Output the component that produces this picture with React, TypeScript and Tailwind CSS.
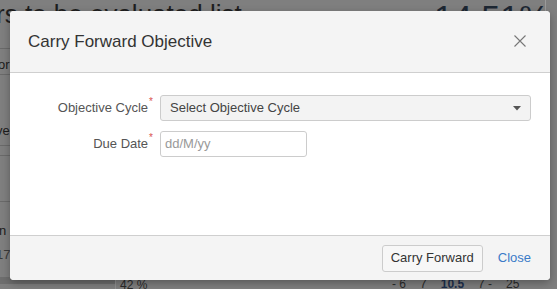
import React from "react";

export default function App() {
  return (
    <div
      className="relative w-[557px] h-[289px] overflow-hidden bg-[#7f7f7f]"
      style={{ fontFamily: '"Liberation Sans", Arial, sans-serif' }}
    >
      {/* faded page behind overlay */}
      <div className="absolute inset-0 text-[#1c1c1c]">
        <div className="absolute left-[-4px] top-[-5px] text-[26px] text-[#1e1e1e] whitespace-nowrap">rs to be evaluated list</div>
        <div className="absolute left-[434px] top-[-8px] text-[34px] text-[#1d2733] whitespace-nowrap">14.51%</div>
        <div className="absolute left-[545px] top-0 h-[11px] w-px bg-[#9a9a9a]" />
        <div className="absolute left-0 top-[48px] w-[12px] h-px bg-[#6a6a6a]" />
        <div className="absolute left-[-2px] top-[55px] text-[13px]">or</div>
        <div className="absolute left-0 top-[74px] w-[12px] h-px bg-[#6a6a6a]" />
        <div className="absolute left-[-4px] top-[121px] text-[13px]">ve</div>
        <div className="absolute left-0 top-[145px] w-[12px] h-px bg-[#6a6a6a]" />
        <div className="absolute left-0 top-[155px] w-[12px] h-px bg-[#6a6a6a]" />
        <div className="absolute left-0 top-[201px] w-[12px] h-px bg-[#6a6a6a]" />
        <div className="absolute left-[-1px] top-[221px] text-[13px]">n</div>
        <div className="absolute left-[-4px] top-[245px] text-[13px] text-[#3a3a3a]">17</div>
        <div className="absolute left-0 top-[277px] w-[115px] h-[7px] bg-[#6e6e6e]" />
        <div className="absolute left-[115px] top-[276px] w-px h-[13px] bg-[#909090]" />
        <div className="absolute left-[120px] top-[276px] text-[12px] text-[#2a2a2a]">42 %</div>
        <div className="absolute left-[392px] top-[275px] text-[12px] text-[#2a2a2a] whitespace-nowrap flex gap-[14px]">
          <span>- 6</span>
          <span>7</span>
          <span className="underline text-[#1d2f4d] font-bold">10.5</span>
          <span>7 -</span>
          <span>25</span>
        </div>
      </div>

      {/* modal */}
      <div className="absolute left-[10px] top-[11px] w-[540px] h-[269px] rounded-[4px] bg-white flex flex-col overflow-hidden shadow-[0_3px_9px_rgba(0,0,0,0.3)]">
        <div className="h-[62px] shrink-0 bg-[#f4f4f4] border-b border-[#cfcfcf] flex items-center justify-between pl-[18px] pr-[24px]">
          <div className="text-[17px] text-[#333333]">Carry Forward Objective</div>
          <svg width="12" height="12" viewBox="0 0 12 12" className="mt-[-1px]">
            <path d="M0.5 0.5 L11.5 11.5 M11.5 0.5 L0.5 11.5" stroke="#777" strokeWidth="1.1" />
          </svg>
        </div>
        <div className="flex-1 bg-white pt-[22px] pr-[19px] flex flex-col gap-[10px]">
          <div className="flex items-center h-[26px]">
            <div className="w-[150px] shrink-0 flex justify-end pr-[7px] text-[13px] text-[#555555]">
              <span>Objective Cycle</span>
              <span className="text-[#d9534f] text-[10px] leading-none mt-[-1px] ml-[1px]">*</span>
            </div>
            <div className="flex-1 h-[26px] rounded-[3px] border border-[#cccccc] bg-[#f3f3f3] flex items-center justify-between pl-[9px] pr-[9px]">
              <span className="text-[13px] text-[#444444]">Select Objective Cycle</span>
              <svg width="8" height="5" viewBox="0 0 8 5">
                <path d="M0 0 H8 L4 4.5 Z" fill="#555" />
              </svg>
            </div>
          </div>
          <div className="flex items-center h-[26px]">
            <div className="w-[150px] shrink-0 flex justify-end pr-[7px] text-[13px] text-[#555555]">
              <span>Due Date</span>
              <span className="text-[#d9534f] text-[10px] leading-none mt-[-1px] ml-[1px]">*</span>
            </div>
            <div className="w-[147px] h-[26px] rounded-[3px] border border-[#cccccc] bg-white flex items-center pl-[4px]">
              <span className="text-[13px] text-[#999999]">dd/M/yy</span>
            </div>
          </div>
        </div>
        <div className="h-[45px] shrink-0 bg-[#f4f4f4] border-t border-[#cfcfcf] flex items-center justify-end pr-[19px] gap-[15px]">
          <div className="w-[101px] h-[27px] rounded-[3px] border border-[#cccccc] bg-[#f7f7f7] flex items-center justify-center text-[13px] text-[#333333]">
            Carry Forward
          </div>
          <div className="text-[13px] text-[#3a7bc8]">Close</div>
        </div>
      </div>
    </div>
  );
}
